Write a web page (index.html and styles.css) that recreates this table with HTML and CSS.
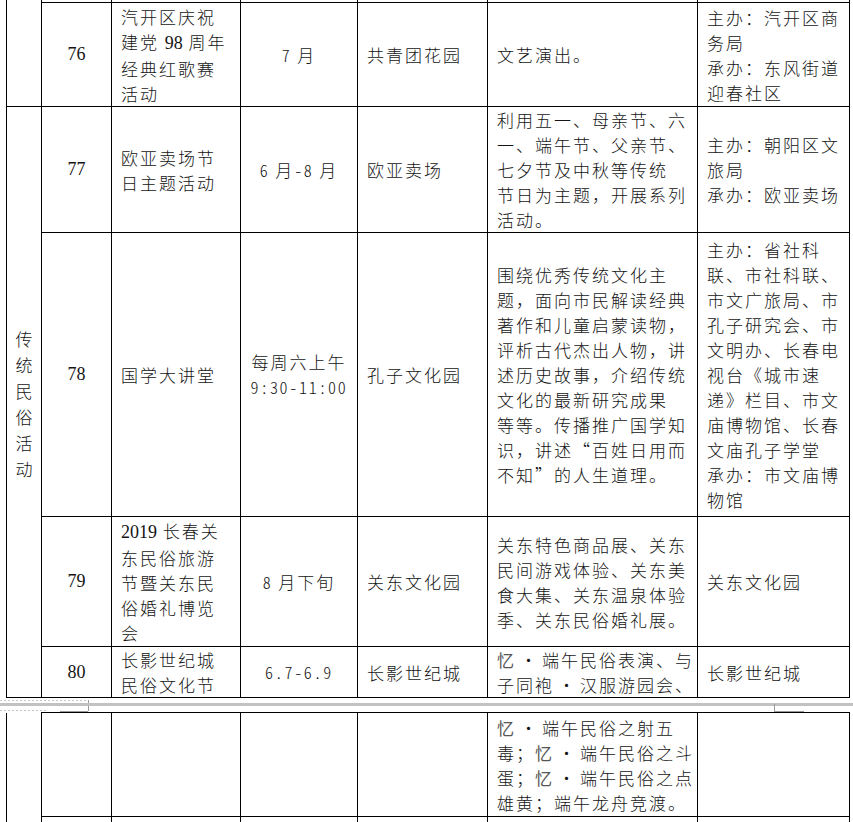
FILE: index.html
```html
<!DOCTYPE html>
<html lang="zh-CN">
<head>
<meta charset="utf-8">
<title>传统民俗活动</title>
<link rel="stylesheet" href="styles.css">
</head>
<body>
<table class="sheet first">
  <colgroup>
    <col class="c-cat"><col class="c-no"><col class="c-name"><col class="c-date"><col class="c-loc"><col class="c-desc"><col class="c-org">
  </colgroup>
  <tr class="r-prev">
    <td class="cat" rowspan="2"></td><td></td><td></td><td></td><td></td><td></td><td></td>
  </tr>
  <tr class="r76">
    <td class="no">76</td>
    <td class="name">汽开区庆祝<br>建党 <span class="lat">98</span> 周年<br>经典红歌赛<br>活动</td>
    <td class="date"><span class="dg">7</span> 月</td>
    <td class="loc">共青团花园</td>
    <td class="desc">文艺演出。</td>
    <td class="org">主办：汽开区商<br>务局<br>承办：东风街道<br>迎春社区</td>
  </tr>
  <tr class="r77">
    <td class="cat label" rowspan="4">传统民俗活动</td>
    <td class="no">77</td>
    <td class="name">欧亚卖场节<br>日主题活动</td>
    <td class="date"><span class="dg">6</span> 月<span class="dg">-8</span> 月</td>
    <td class="loc">欧亚卖场</td>
    <td class="desc">利用五一、母亲节、六<br>一、端午节、父亲节、<br>七夕节及中秋等传统<br>节日为主题，开展系列<br>活动。</td>
    <td class="org">主办：朝阳区文<br>旅局<br>承办：欧亚卖场</td>
  </tr>
  <tr class="r78">
    <td class="no">78</td>
    <td class="name">国学大讲堂</td>
    <td class="date">每周六上午<br><span class="dg">9:30-11:00</span></td>
    <td class="loc">孔子文化园</td>
    <td class="desc">围绕优秀传统文化主<br>题，面向市民解读经典<br>著作和儿童启蒙读物，<br>评析古代杰出人物，讲<br>述历史故事，介绍传统<br>文化的最新研究成果<br>等等。传播推广国学知<br>识，讲述“百姓日用而<br>不知”的人生道理。</td>
    <td class="org">主办：省社科<br>联、市社科联、<br>市文广旅局、市<br>孔子研究会、市<br>文明办、长春电<br>视台《城市速<br>递》栏目、市文<br>庙博物馆、长春<br>文庙孔子学堂<br>承办：市文庙博<br>物馆</td>
  </tr>
  <tr class="r79">
    <td class="no">79</td>
    <td class="name"><span class="lat">2019</span> 长春关<br>东民俗旅游<br>节暨关东民<br>俗婚礼博览<br>会</td>
    <td class="date"><span class="dg">8</span> 月下旬</td>
    <td class="loc">关东文化园</td>
    <td class="desc">关东特色商品展、关东<br>民间游戏体验、关东美<br>食大集、关东温泉体验<br>季、关东民俗婚礼展。</td>
    <td class="org">关东文化园</td>
  </tr>
  <tr class="r80">
    <td class="no">80</td>
    <td class="name">长影世纪城<br>民俗文化节</td>
    <td class="date"><span class="dg">6.7-6.9</span></td>
    <td class="loc">长影世纪城</td>
    <td class="desc"><span class="yi">忆</span><span class="dot">·</span>端午民俗表演、与<br>子同袍<span class="dot">·</span>汉服游园会、</td>
    <td class="org">长影世纪城</td>
  </tr>
</table>

<div class="page-gap">
  <svg class="gap-marks" width="853" height="14" viewBox="0 0 853 14" aria-hidden="true">
    <line x1="0" y1="2.5" x2="88" y2="2.5" stroke="#c4c4c4" stroke-width="1" stroke-dasharray="2 2"/>
    <line x1="88.5" y1="2" x2="88.5" y2="13" stroke="#9a9a9a" stroke-width="1"/>
    <line x1="0" y1="12.5" x2="46" y2="12.5" stroke="#c4c4c4" stroke-width="1" stroke-dasharray="2 2"/>
    <line x1="60" y1="13.5" x2="88" y2="13.5" stroke="#9a9a9a" stroke-width="1"/>
    <rect x="0" y="5" width="853" height="3" fill="#c2c2c2"/>
    <line x1="774.5" y1="6" x2="774.5" y2="14" stroke="#9a9a9a" stroke-width="1"/>
    <line x1="774" y1="13.5" x2="804" y2="13.5" stroke="#9a9a9a" stroke-width="1"/>
  </svg>
</div>

<table class="sheet second">
  <colgroup>
    <col class="c-cat"><col class="c-no"><col class="c-name"><col class="c-date"><col class="c-loc"><col class="c-desc"><col class="c-org">
  </colgroup>
  <tr class="r80b">
    <td class="cat cont" rowspan="2"></td>
    <td class="no"></td>
    <td class="name"></td>
    <td class="date"></td>
    <td class="loc"></td>
    <td class="desc"><span class="yi">忆</span><span class="dot">·</span>端午民俗之射五<br>毒；<span class="yi">忆</span><span class="dot">·</span>端午民俗之斗<br>蛋；<span class="yi">忆</span><span class="dot">·</span>端午民俗之点<br>雄黄；端午龙舟竞渡。</td>
    <td class="org"></td>
  </tr>
  <tr class="r-next">
    <td class="no"></td><td class="name"></td><td class="date"></td><td class="loc"></td><td class="desc"></td><td class="org"></td>
  </tr>
</table>
</body>
</html>
```

FILE: styles.css
```css
html, body {
  margin: 0;
  padding: 0;
  background: #ffffff;
}

body {
  width: 853px;
  height: 822px;
  overflow: hidden;
  color: #141414;
  font-family: "Noto Sans CJK SC", "Noto Sans CJK JP", sans-serif;
}

.sheet {
  border-collapse: collapse;
  table-layout: fixed;
  width: 844px;
  margin-left: 6px;
  font-size: 17px;
  font-weight: 300;
  line-height: 25px;
  letter-spacing: 2px;
}

.c-cat { width: 35px; }
.c-no { width: 70px; }
.c-name { width: 129px; }
.c-date { width: 117px; }
.c-loc { width: 130px; }
.c-desc { width: 210px; }
.c-org { width: 152px; }

.sheet td {
  border: 1px solid #000;
  padding: 0 1px 0 9px;
  vertical-align: middle;
  text-align: left;
  white-space: nowrap;
  overflow: hidden;
}

.sheet td.no {
  padding: 0;
  text-align: center;
  font-family: "Liberation Serif", serif;
  font-size: 18px;
  font-weight: 400;
  letter-spacing: 0;
}

.sheet td.date {
  padding: 0;
  text-align: center;
}

.sheet td.cat {
  padding: 0 8px;
  text-align: center;
  white-space: normal;
  line-height: 26px;
  letter-spacing: 0;
}

.sheet td.cat.label {
  padding-top: 4px;
}

.dg {
  font-size: 16px;
  font-feature-settings: "hwid" 1;
  letter-spacing: 1.7px;
}

.lat {
  font-family: "Liberation Serif", serif;
  font-size: 18px;
  font-weight: 400;
  letter-spacing: 0;
}

.yi {
  font-weight: 400;
  color: #555555;
}

.dot {
  margin: 0 5px 0 4px;
  letter-spacing: 0;
}

/* first partial row (continuation from previous rows) */
.r-prev td {
  border-top: none;
  height: 2px;
  padding: 0;
  line-height: 0;
  font-size: 0;
}
.r-prev td.cat { border-bottom: 1px solid #000; }

.r76 { height: 104px; }
.r77 { height: 125px; }
.r78 { height: 284px; }
.r79 { height: 130px; }
.r80 { height: 51px; }

.page-gap {
  height: 14px;
  line-height: 0;
}

.gap-marks {
  display: block;
}

.second td.cont {
  border-top: none;
}

.r80b { height: 104px; }
.r-next td { height: 40px; border-bottom: none; }
```
